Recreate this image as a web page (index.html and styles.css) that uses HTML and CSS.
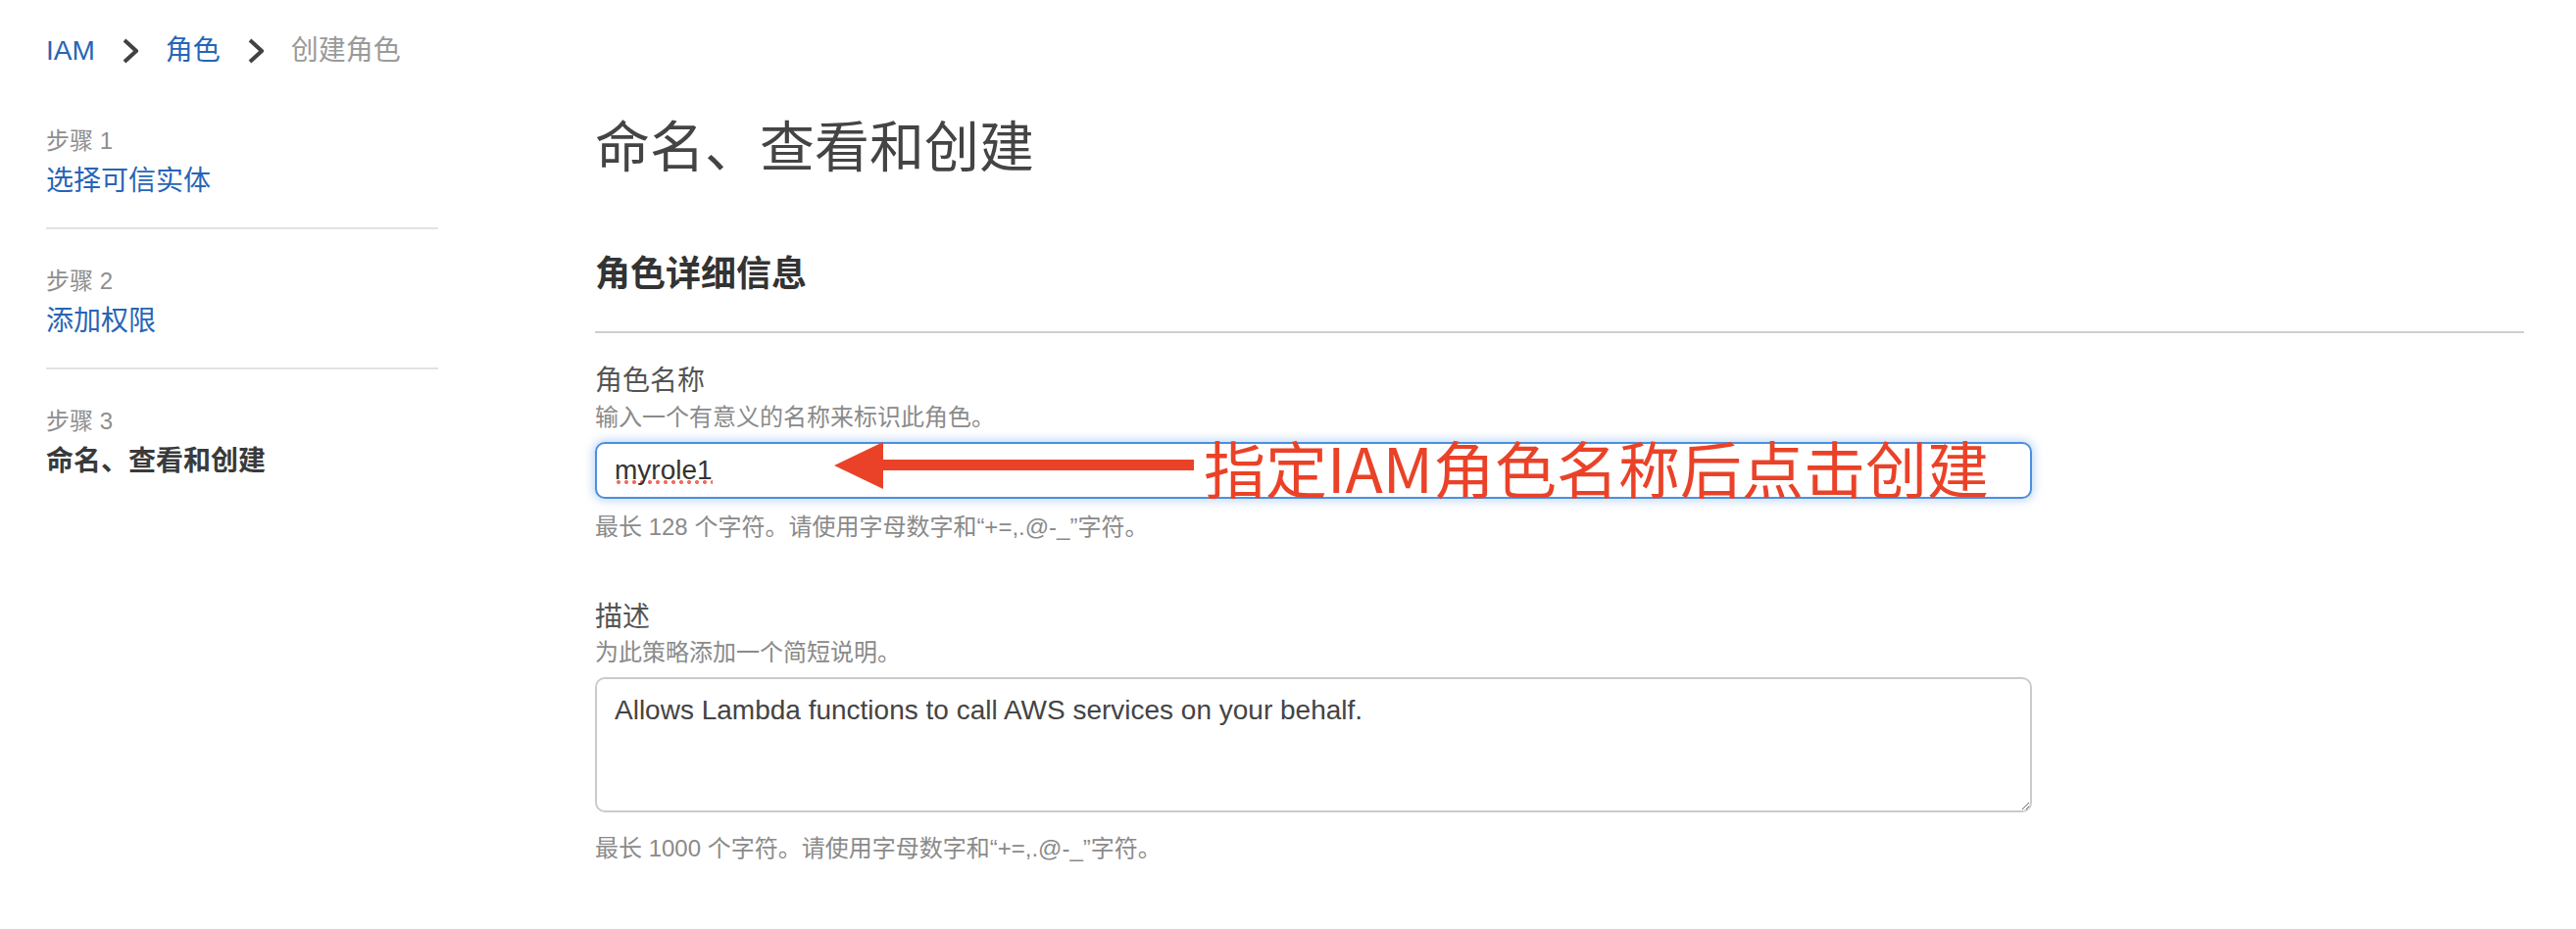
FILE: index.html
```html
<!DOCTYPE html>
<html lang="zh-CN">
<head>
<meta charset="utf-8">
<title>创建角色</title>
<link rel="stylesheet" href="styles.css">
</head>
<body>
<div class="page">
  <nav class="crumbs">
    <a class="crumb link">IAM</a>
    <svg class="chev" viewBox="0 0 16 26"><polyline points="2,2 14,13 2,24" /></svg>
    <a class="crumb link">角色</a>
    <svg class="chev" viewBox="0 0 16 26"><polyline points="2,2 14,13 2,24" /></svg>
    <span class="crumb current">创建角色</span>
  </nav>

  <div class="layout">
    <aside class="steps">
      <div class="step">
        <div class="step-num">步骤 1</div>
        <div class="step-title link">选择可信实体</div>
      </div>
      <div class="step">
        <div class="step-num">步骤 2</div>
        <div class="step-title link">添加权限</div>
      </div>
      <div class="step">
        <div class="step-num">步骤 3</div>
        <div class="step-title current">命名、查看和创建</div>
      </div>
    </aside>

    <main class="main">
      <h1 class="page-title">命名、查看和创建</h1>
      <section class="details">
        <h2 class="section-title">角色详细信息</h2>
        <div class="field">
          <label class="field-label">角色名称</label>
          <div class="field-desc">输入一个有意义的名称来标识此角色。</div>
          <div class="input focused"><span class="typo">myrole1</span></div>
          <div class="field-hint">最长 128 个字符。请使用字母数字和“+=,.@-_”字符。</div>
        </div>
        <div class="field field-gap">
          <label class="field-label">描述</label>
          <div class="field-desc tight">为此策略添加一个简短说明。</div>
          <textarea class="textarea">Allows Lambda functions to call AWS services on your behalf.</textarea>
          <div class="field-hint hint-far">最长 1000 个字符。请使用字母数字和“+=,.@-_”字符。</div>
        </div>
      </section>
    </main>
  </div>

  <div class="annot">
    <svg class="arrow" viewBox="0 0 380 62">
      <rect x="50" y="24" width="323" height="11" />
      <polygon points="6,30 56,6 56,54" />
    </svg>
    <span class="annot-text">指定IAM角色名称后点击创建</span>
  </div>
</div>
</body>
</html>
```

FILE: styles.css
```css
html, body {
  margin: 0;
  padding: 0;
  background: #ffffff;
}

body {
  font-family: "Liberation Sans", "Noto Sans CJK SC", sans-serif;
  color: #333333;
}

.page {
  position: relative;
  width: 2628px;
  height: 948px;
  overflow: hidden;
}

.link {
  color: #2764b6;
}

/* Breadcrumb */
.crumbs {
  display: flex;
  align-items: center;
  gap: 28px;
  padding: 36px 0 0 47px;
  height: 32px;
  font-size: 28px;
  line-height: 32px;
}

.crumb.current {
  color: #9a9a9a;
}

.chev {
  width: 16px;
  height: 26px;
  flex: none;
}

.chev polyline {
  fill: none;
  stroke: #424242;
  stroke-width: 4;
}

/* Two-column layout */
.layout {
  display: grid;
  grid-template-columns: 400px 1fr;
  column-gap: 160px;
  padding: 0 53px 0 47px;
  margin-top: 23px;
}

/* Steps nav */
.step {
  padding: 37px 0 27px;
  border-bottom: 2px solid #e2e2e2;
}

.step:last-child {
  border-bottom: none;
}

.step-num {
  font-size: 24px;
  line-height: 32px;
  color: #8e8e8e;
}

.step-title {
  margin-top: 5px;
  font-size: 28px;
  line-height: 40px;
}

.step-title.current {
  font-weight: 700;
  color: #3a3a3a;
}

/* Main */
.page-title {
  margin: 28px 0 0;
  font-size: 56px;
  line-height: 64px;
  font-weight: 400;
  color: #444444;
}

.section-title {
  margin: 75px 0 0;
  padding-bottom: 36px;
  border-bottom: 2px solid #cfcfcf;
  font-size: 36px;
  line-height: 44px;
  font-weight: 700;
  color: #333333;
}

.field {
  margin-top: 31px;
}

.field.field-gap {
  margin-top: 58px;
}

.field-label {
  display: block;
  font-size: 28px;
  line-height: 36px;
  color: #545454;
}

.field-desc {
  margin-top: 3px;
  font-size: 24px;
  line-height: 32px;
  color: #8a8a8a;
}

.field-desc.tight {
  margin-top: 2px;
}

.input {
  margin-top: 9px;
  box-sizing: border-box;
  width: 1466px;
  height: 58px;
  padding: 0 18px;
  border: 2px solid #4a8fe0;
  border-radius: 10px;
  box-shadow: 0 0 10px 2px rgba(74, 143, 224, 0.35);
  font-size: 28px;
  line-height: 54px;
  color: #333333;
  background: #ffffff;
}

.typo {
  background-image: radial-gradient(circle at 4px 3px, #ee6f62 1.8px, transparent 2.3px);
  background-size: 8px 6px;
  background-repeat: repeat-x;
  background-position: 0 100%;
}

.field-hint {
  margin-top: 13px;
  font-size: 24px;
  line-height: 32px;
  color: #8a8a8a;
}

.field-hint.hint-far {
  margin-top: 21px;
}

.textarea {
  display: block;
  margin-top: 9px;
  box-sizing: border-box;
  width: 1466px;
  height: 138px;
  padding: 14px 18px;
  border: 2px solid #cbcbcb;
  border-radius: 10px;
  font-family: "Liberation Sans", "Noto Sans CJK SC", sans-serif;
  font-size: 28px;
  line-height: 36px;
  color: #444444;
  background: #ffffff;
  outline: none;
}

/* Red annotation overlay */
.annot {
  position: absolute;
  left: 845px;
  top: 445px;
  display: flex;
  align-items: center;
  height: 62px;
}

.arrow {
  width: 380px;
  height: 62px;
  flex: none;
}

.arrow rect,
.arrow polygon {
  fill: #ea4228;
}

.annot-text {
  margin-left: 3px;
  font-family: "Noto Sans CJK SC", sans-serif;
  font-size: 63px;
  line-height: 62px;
  color: #ea4228;
  white-space: nowrap;
}
```
